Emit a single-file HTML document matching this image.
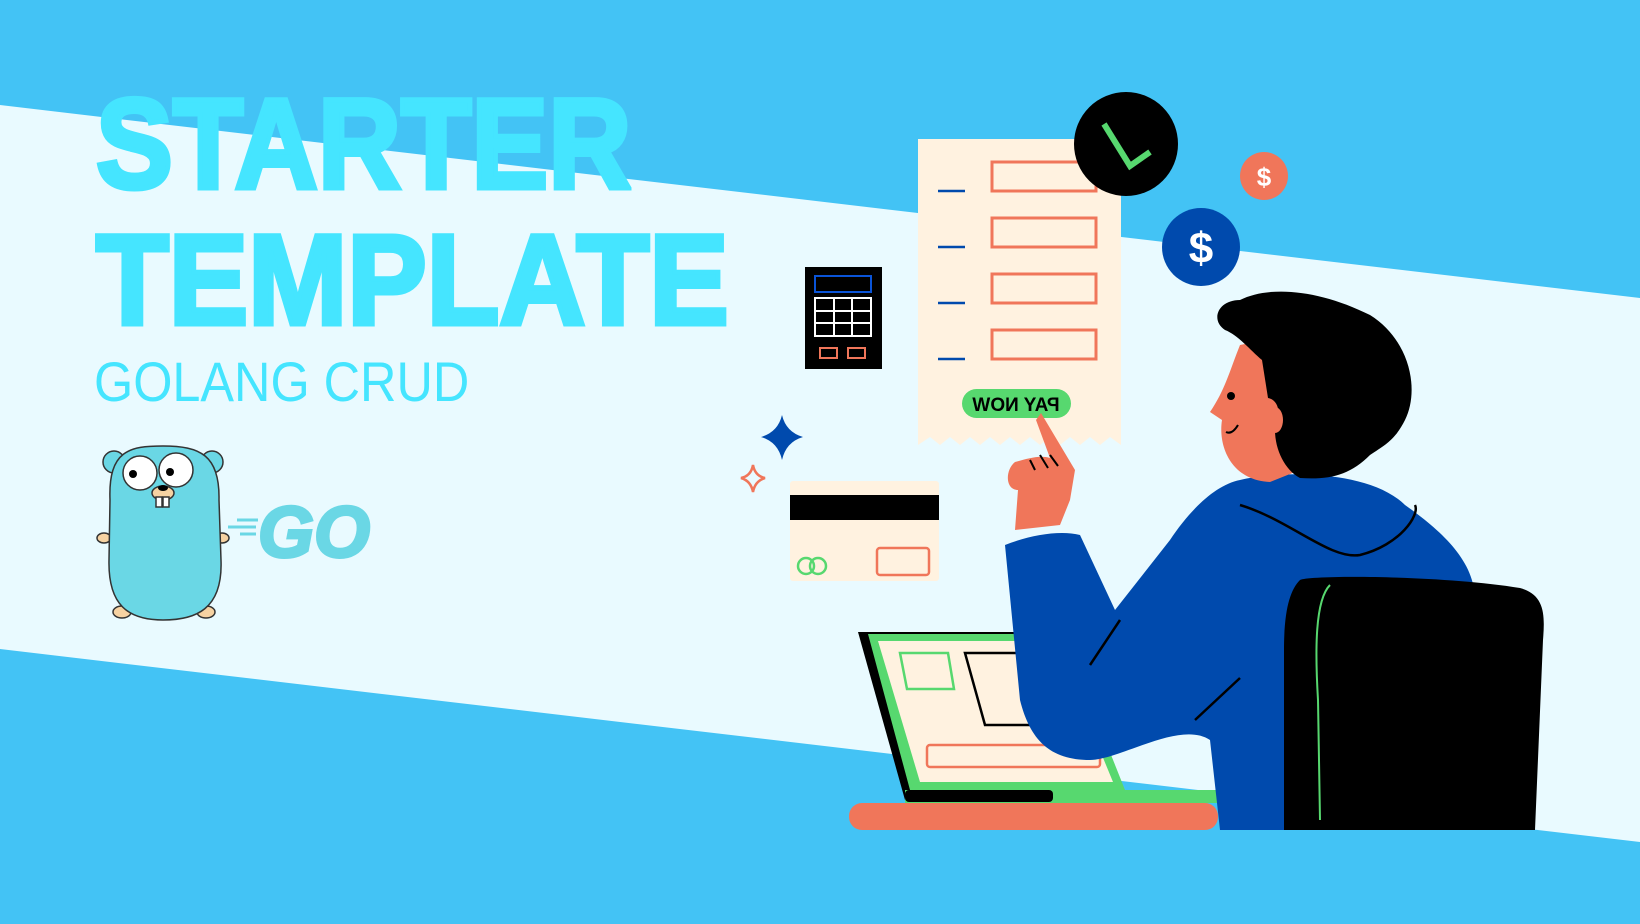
<!DOCTYPE html>
<html><head><meta charset="utf-8"><style>
html,body{margin:0;padding:0}
body{width:1640px;height:924px;overflow:hidden;background:#43c3f5;position:relative;font-family:"Liberation Sans",sans-serif}
svg{position:absolute;left:0;top:0}
.t{position:absolute;left:96px;color:#45e5ff;font-weight:bold;white-space:nowrap;transform-origin:0 0;-webkit-text-stroke:5px #45e5ff}
</style></head><body>
<svg width="1640" height="924" viewBox="0 0 1640 924">
<polygon points="0,105 1640,298 1640,842 0,649" fill="#e9faff"/>
</svg>
<div class="t" style="top:70px;font-size:128px;line-height:150px;transform:scaleX(0.9)">STARTER</div>
<div class="t" style="top:206px;font-size:128px;line-height:150px;transform:scaleX(0.93)">TEMPLATE</div>
<div class="t" style="left:94px;top:350px;font-size:56px;line-height:64px;font-weight:normal;-webkit-text-stroke:0;transform:scaleX(0.9)">GOLANG CRUD</div>
<svg width="1640" height="924" viewBox="0 0 1640 924">
<!-- gopher -->
<g stroke="#333" stroke-width="1.5">
<ellipse cx="104" cy="538" rx="7" ry="5" fill="#f6d2a2"/>
<ellipse cx="222" cy="538" rx="7" ry="5" fill="#f6d2a2"/>
<ellipse cx="122" cy="612" rx="9" ry="6" fill="#f6d2a2"/>
<ellipse cx="206" cy="612" rx="9" ry="6" fill="#f6d2a2"/>
<circle cx="114" cy="462" r="11" fill="#6ad7e5"/>
<circle cx="212" cy="462" r="11" fill="#6ad7e5"/>
<path d="M110,500 C108,450 130,446 163,446 C200,446 220,455 219,500 L221,560 C223,610 195,620 163,620 C128,620 108,605 109,560 Z" fill="#6ad7e5"/>
<circle cx="140" cy="473" r="17" fill="#fff"/>
<circle cx="176" cy="470" r="17" fill="#fff"/>
<ellipse cx="163" cy="493" rx="11" ry="7" fill="#f6d2a2"/>
<rect x="156" y="497" width="6" height="10" fill="#fff"/>
<rect x="163" y="497" width="6" height="10" fill="#fff"/>
</g>
<circle cx="133" cy="474" r="4" fill="#000"/><circle cx="170" cy="472" r="4" fill="#000"/>
<ellipse cx="163" cy="488" rx="5" ry="3" fill="#000"/>
<g stroke="#6ad7e5" stroke-width="3"><line x1="237" y1="520" x2="258" y2="520"/><line x1="228" y1="527" x2="256" y2="527"/><line x1="240" y1="534" x2="256" y2="534"/></g>
<text x="258" y="557" font-family="Liberation Sans" font-weight="bold" font-style="italic" font-size="72" fill="#6ad7e5" stroke="#6ad7e5" stroke-width="3">GO</text>

<!-- receipt -->
<path d="M918,139 H1121 V445 L1110,437 1100,445 1090,437 1080,445 1070,437 1060,445 1050,437 1040,445 1030,437 1020,445 1010,437 1000,445 990,437 980,445 970,437 960,445 950,437 940,445 930,437 918,445 Z" fill="#fff2e0"/>
<g fill="none" stroke="#f0765a" stroke-width="3">
<rect x="992" y="162" width="104" height="29"/><rect x="992" y="218" width="104" height="29"/>
<rect x="992" y="274" width="104" height="29"/><rect x="992" y="330" width="104" height="29"/>
</g>
<g stroke="#004aad" stroke-width="2.5"><line x1="938" y1="191" x2="965" y2="191"/><line x1="938" y1="247" x2="965" y2="247"/><line x1="938" y1="303" x2="965" y2="303"/><line x1="938" y1="359" x2="965" y2="359"/></g>
<rect x="962" y="389" width="109" height="29" rx="14.5" fill="#57d86f"/>
<text x="1016" y="411" text-anchor="middle" font-size="19" font-weight="bold" fill="#000" transform="scale(-1,1) translate(-2032,0)">PAY NOW</text>
<!-- check -->
<circle cx="1126" cy="144" r="52" fill="#000"/>
<path d="M1104,124 L1130,166 L1150,152" fill="none" stroke="#57d86f" stroke-width="6"/>
<circle cx="1264" cy="176" r="24" fill="#f0765a"/>
<text x="1264" y="186" text-anchor="middle" font-size="26" font-weight="bold" fill="#fff">$</text>
<circle cx="1201" cy="247" r="39" fill="#004aad"/>
<text x="1201" y="263" text-anchor="middle" font-size="44" font-weight="bold" fill="#fff">$</text>
<!-- calculator -->
<rect x="805" y="267" width="77" height="102" fill="#000"/>
<rect x="815" y="276" width="56" height="16" fill="none" stroke="#0a54d8" stroke-width="2"/>
<g fill="none" stroke="#fff" stroke-width="2"><rect x="815" y="298" width="56" height="38"/><line x1="834" y1="298" x2="834" y2="336"/><line x1="852" y1="298" x2="852" y2="336"/><line x1="815" y1="311" x2="871" y2="311"/><line x1="815" y1="323" x2="871" y2="323"/></g>
<rect x="820" y="348" width="17" height="10" fill="none" stroke="#f0765a" stroke-width="2"/>
<rect x="848" y="348" width="17" height="10" fill="none" stroke="#f0765a" stroke-width="2"/>
<!-- sparkles -->
<path d="M782,415 Q786,432 803,437 Q786,442 782,460 Q778,442 761,437 Q778,432 782,415Z" fill="#004aad"/>
<path d="M753,465 Q755,476 765,478 Q755,481 753,492 Q751,481 741,478 Q751,476 753,465Z" fill="none" stroke="#f0765a" stroke-width="2.5"/>
<!-- card -->
<rect x="790" y="481" width="149" height="100" rx="3" fill="#fff2e0"/>
<rect x="790" y="495" width="149" height="25" fill="#000"/>
<circle cx="806" cy="566" r="8" fill="none" stroke="#57d86f" stroke-width="2.5"/>
<circle cx="818" cy="566" r="8" fill="none" stroke="#57d86f" stroke-width="2.5"/>
<rect x="877" y="548" width="52" height="27" rx="3" fill="none" stroke="#f0765a" stroke-width="2.5"/>
<!-- laptop -->
<polygon points="858,632 1060,632 1100,795 905,800" fill="#000"/>
<polygon points="868,634 1063,634 1125,790 910,790" fill="#57d86f"/>
<polygon points="878,641 1055,641 1113,782 920,782" fill="#fff2e0"/>
<polygon points="900,653 948,653 954,689 907,689" fill="none" stroke="#57d86f" stroke-width="2.5"/>
<polygon points="965,653 1050,653 1060,725 985,725" fill="none" stroke="#000" stroke-width="2.5"/>
<rect x="927" y="745" width="173" height="22" rx="3" fill="none" stroke="#f0765a" stroke-width="2.5"/>
<rect x="905" y="790" width="313" height="13" fill="#57d86f"/>
<rect x="905" y="790" width="148" height="12" rx="4" fill="#000"/>
<rect x="849" y="803" width="369" height="27" rx="13" fill="#f0765a"/>
<!-- person -->
<path d="M1240,480 C1280,470 1370,470 1405,505 C1440,530 1475,560 1475,600 L1470,830 L1220,830 L1210,740 C1180,720 1120,760 1090,760 C1050,760 1030,740 1020,700 L1005,545 C1030,535 1060,530 1080,535 L1115,610 L1170,540 C1190,510 1215,485 1240,480Z" fill="#004aad"/>
<path d="M1240,505 C1290,520 1330,560 1360,555 C1400,545 1420,515 1415,505" fill="none" stroke="#000" stroke-width="2.5"/>
<path d="M1120,620 L1090,665 M1240,678 L1195,720" stroke="#000" stroke-width="2.5"/>
<path d="M1240,345 C1230,370 1225,390 1210,412 L1222,420 C1218,445 1230,480 1270,482 L1300,470 L1290,335Z" fill="#f0765a"/>
<circle cx="1231" cy="396" r="4" fill="#000"/>
<path d="M1226,432 Q1232,435 1238,425" fill="none" stroke="#000" stroke-width="2"/>
<path d="M1225,330 C1210,320 1218,300 1240,300 C1270,285 1320,290 1370,315 C1410,340 1420,390 1405,420 C1395,440 1385,445 1370,455 C1350,475 1330,480 1300,478 C1285,470 1275,450 1275,430 C1282,412 1278,400 1268,398 L1262,360 C1250,350 1238,335 1225,330Z" fill="#000"/>
<ellipse cx="1275" cy="420" rx="8" ry="13" fill="#f0765a"/>
<path d="M1041,413 L1075,470 L1070,500 L1060,525 L1015,530 L1018,490 C1005,490 1005,470 1015,462 C1030,458 1040,455 1050,458 L1036,420Z" fill="#f0765a"/>
<path d="M1030,460 L1035,470 M1040,455 L1048,468 M1050,455 L1058,466" stroke="#000" stroke-width="2"/>
<!-- chair -->
<path d="M1300,580 C1310,575 1440,575 1520,588 C1545,595 1545,615 1543,640 L1535,830 L1284,830 L1284,650 C1284,610 1290,590 1300,580Z" fill="#000"/>
<path d="M1330,585 C1315,600 1315,650 1318,700 L1320,820" fill="none" stroke="#57d86f" stroke-width="2"/>
</svg>
</body></html>
